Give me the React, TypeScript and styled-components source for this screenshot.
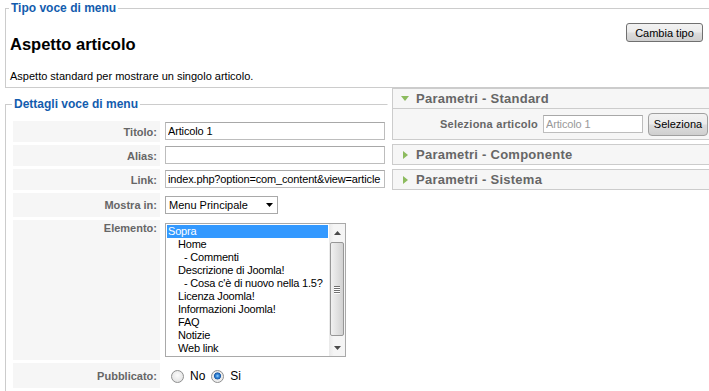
import React from 'react';
import styled, { createGlobalStyle } from 'styled-components';

const GlobalStyle = createGlobalStyle`
  html, body {
    margin: 0;
    padding: 0;
    background: #fff;
  }
  body {
    font-family: "Liberation Sans", Arial, sans-serif;
    font-size: 11px;
    color: #000;
    overflow: hidden;
  }
`;

const Page = styled.div`
  width: 712px;
`;

const Fieldset = styled.fieldset<{ $pad: string; $margin: string; $openRight?: boolean }>`
  margin: ${(p) => p.$margin};
  padding: ${(p) => p.$pad};
  border: 1px solid #ccc;
  border-right-color: ${(p) => (p.$openRight ? 'transparent' : '#ccc')};
  min-width: 0;
`;

const Legend = styled.legend`
  color: #135cae;
  font: bold 12px/17px "Liberation Sans", Arial, sans-serif;
  padding: 0 2px;
  margin-left: -1px;
`;

const TypeRow = styled.div`
  display: flex;
  justify-content: space-between;
  align-items: flex-start;
`;

const Heading = styled.h2`
  margin: 11px 0 0;
  font-size: 16.5px;
  line-height: 20px;
  font-weight: bold;
`;

const Description = styled.p`
  margin: 15px 0 0;
  line-height: 14px;
`;

const Button = styled.button<{ $w: number; $h: number }>`
  width: ${(p) => p.$w}px;
  height: ${(p) => p.$h}px;
  padding: 0;
  font: 11px "Liberation Sans", Arial, sans-serif;
  color: #000;
  border: 1px solid #707070;
  border-radius: 3px;
  background: linear-gradient(#f2f2f2, #ebebeb 48%, #dddddd 52%, #cfcfcf);
`;

const SelectButton = styled(Button)`
  margin-left: 5px;
  border-radius: 4px;
  border-color: #a0a0a0;
`;

const Main = styled.div`
  display: flex;
  align-items: flex-start;
`;

const LeftCol = styled.div`
  width: 388px;
  flex: none;
`;

const RightCol = styled.div`
  flex: 1;
  margin-left: 4px;
`;

const FormGrid = styled.div`
  display: grid;
  grid-template-columns: 147px 1fr;
  column-gap: 2px;
  row-gap: 3px;
`;

const LabelCell = styled.div<{ $top?: boolean }>`
  background: #f6f6f6;
  display: flex;
  justify-content: flex-end;
  align-items: ${(p) => (p.$top ? 'flex-start' : 'center')};
  padding: ${(p) => (p.$top ? '2px 3px 0 0' : '0 3px 0 0')};
  font-weight: bold;
  color: #666;
`;

const ValueCell = styled.div<{ $pad?: string }>`
  padding: ${(p) => p.$pad || '1px 3px 2px'};
  display: flex;
  align-items: center;
`;

const TextInput = styled.input<{ $w: number; $muted?: boolean }>`
  box-sizing: border-box;
  width: ${(p) => p.$w}px;
  height: 18px;
  margin: 0;
  padding: 0 1px 0 2px;
  border: 1px solid #bdbdbd;
  border-top-color: #a8a8a8;
  font: 11px "Liberation Sans", Arial, sans-serif;
  letter-spacing: -0.15px;
  color: ${(p) => (p.$muted ? '#999' : '#000')};
  background: #fff;
  outline: none;
`;

const Select = styled.div`
  box-sizing: border-box;
  width: 113px;
  height: 18px;
  border: 1px solid #a9a9a9;
  display: flex;
  align-items: center;
  justify-content: space-between;
  padding: 0 4px 0 3px;
  background: #fff;
`;

const ListBox = styled.div`
  box-sizing: border-box;
  width: 181px;
  height: 134px;
  border: 1px solid #a9a9a9;
  display: flex;
  background: #fff;
`;

const ListItems = styled.div`
  flex: 1;
  padding: 1px;
  overflow: hidden;
`;

const ListItem = styled.div<{ $level: number; $selected?: boolean }>`
  height: 13px;
  line-height: 13px;
  white-space: nowrap;
  letter-spacing: -0.2px;
  padding-left: ${(p) => [1, 11, 17][p.$level]}px;
  background: ${(p) => (p.$selected ? '#3399ff' : 'transparent')};
  color: ${(p) => (p.$selected ? '#fff' : '#000')};
`;

const Scrollbar = styled.div`
  width: 16px;
  display: flex;
  flex-direction: column;
  background: linear-gradient(90deg, #e9e9e9, #f5f5f5 30%, #f5f5f5);
`;

const ScrollButton = styled.div`
  height: 17px;
  display: flex;
  align-items: center;
  justify-content: center;
`;

const Track = styled.div`
  flex: 1;
  padding: 1px 1px 3px;
  display: flex;
  flex-direction: column;
`;

const Thumb = styled.div`
  height: 92px;
  border: 1px solid #979797;
  border-radius: 2px;
  background: linear-gradient(90deg, #f1f1f1, #e3e3e3 45%, #d2d2d2);
  display: flex;
  flex-direction: column;
  align-items: center;
  justify-content: center;
  gap: 1px;
`;

const Grip = styled.span`
  width: 6px;
  height: 1px;
  background: #707070;
  box-shadow: 0 1px 0 #fff;
`;

const RadioGroup = styled.div`
  display: flex;
  align-items: center;
  padding-left: 6px;
`;

const Radio = styled.span<{ $checked?: boolean }>`
  box-sizing: border-box;
  width: 13px;
  height: 13px;
  border-radius: 50%;
  border: 1px solid #8e8f8f;
  background: ${(p) =>
    p.$checked
      ? 'radial-gradient(circle at 50% 45%, #9fd6ff 0, #3c8fe0 1.5px, #1b5aa6 3.2px, #e9e9e9 3.8px, #f6f6f6)'
      : 'radial-gradient(circle at 50% 40%, #fbfbfb, #dcdcdc)'};
`;

const RadioText = styled.span`
  margin: 0 6px 0 6px;
  font-size: 12px;
`;

const Panel = styled.div`
  border: 1px solid #ccc;
  margin-bottom: 4px;
  background: #f6f6f6;
`;

const PanelHeader = styled.h3`
  margin: 0;
  height: 19px;
  display: flex;
  align-items: center;
  padding-left: 8px;
  font: bold 13px "Liberation Sans", Arial, sans-serif;
  letter-spacing: 0.25px;
  color: #666;
`;

const ArrowSlot = styled.span`
  width: 8px;
  margin-right: 7px;
  display: flex;
  justify-content: center;
`;

const PanelBody = styled.div`
  border-top: 1px solid #ccc;
  height: 30px;
  display: flex;
  align-items: center;
`;

const ParamLabel = styled.span`
  width: 145px;
  text-align: right;
  font-weight: bold;
  color: #666;
  letter-spacing: 0.25px;
  margin-right: 5px;
`;

const menuItems: { text: string; level: number }[] = [
  { text: 'Sopra', level: 0 },
  { text: 'Home', level: 1 },
  { text: '- Commenti', level: 2 },
  { text: 'Descrizione di Joomla!', level: 1 },
  { text: "- Cosa c'è di nuovo nella 1.5?", level: 2 },
  { text: 'Licenza Joomla!', level: 1 },
  { text: 'Informazioni Joomla!', level: 1 },
  { text: 'FAQ', level: 1 },
  { text: 'Notizie', level: 1 },
  { text: 'Web link', level: 1 },
];

const Tri: React.FC<{ dir: 'down' | 'right' | 'up'; color: string }> = ({ dir, color }) => {
  if (dir === 'right') {
    return (
      <svg width="5" height="8" viewBox="0 0 5 8">
        <polygon points="0,0 5,4 0,8" fill={color} />
      </svg>
    );
  }
  if (dir === 'up') {
    return (
      <svg width="7" height="4" viewBox="0 0 7 4">
        <polygon points="0,4 3.5,0 7,4" fill={color} />
      </svg>
    );
  }
  return (
    <svg width="8" height="5" viewBox="0 0 8 5">
      <polygon points="0,0 8,0 4,5" fill={color} />
    </svg>
  );
};

const SmallDown: React.FC<{ color: string }> = ({ color }) => (
  <svg width="7" height="4" viewBox="0 0 7 4">
    <polygon points="0,0 7,0 3.5,4" fill={color} />
  </svg>
);

const PaneToggler: React.FC<{ title: string; open?: boolean }> = ({ title, open }) => (
  <PanelHeader>
    <ArrowSlot>
      <Tri dir={open ? 'down' : 'right'} color="#8cbb5e" />
    </ArrowSlot>
    {title}
  </PanelHeader>
);

const App: React.FC = () => {
  return (
    <Page>
      <GlobalStyle />
      <Fieldset $margin="0 0 0 5px" $pad="6px 8px 4px 4px">
        <Legend>Tipo voce di menu</Legend>
        <TypeRow>
          <div>
            <Heading>Aspetto articolo</Heading>
            <Description>Aspetto standard per mostrare un singolo articolo.</Description>
          </div>
          <Button $w={77} $h={19}>Cambia tipo</Button>
        </TypeRow>
      </Fieldset>

      <Main>
        <LeftCol>
          <Fieldset $margin="8px 0 0 5px" $pad="8px 0 0 7px" $openRight>
            <Legend>Dettagli voce di menu</Legend>
            <FormGrid>
              <LabelCell>Titolo:</LabelCell>
              <ValueCell>
                <TextInput $w={220} defaultValue="Articolo 1" readOnly />
              </ValueCell>

              <LabelCell>Alias:</LabelCell>
              <ValueCell>
                <TextInput $w={220} defaultValue="" readOnly />
              </ValueCell>

              <LabelCell>Link:</LabelCell>
              <ValueCell>
                <TextInput $w={220} defaultValue="index.php?option=com_content&view=article" readOnly />
              </ValueCell>

              <LabelCell>Mostra in:</LabelCell>
              <ValueCell $pad="3px 3px">
                <Select>
                  <span>Menu Principale</span>
                  <SmallDown color="#000" />
                </Select>
              </ValueCell>

              <LabelCell $top>Elemento:</LabelCell>
              <ValueCell $pad="3px 3px 3px">
                <ListBox>
                  <ListItems>
                    {menuItems.map((item, i) => (
                      <ListItem key={item.text} $level={item.level} $selected={i === 0}>
                        {item.text}
                      </ListItem>
                    ))}
                  </ListItems>
                  <Scrollbar>
                    <ScrollButton>
                      <Tri dir="up" color="#4a4a4a" />
                    </ScrollButton>
                    <Track>
                      <Thumb>
                        <Grip />
                        <Grip />
                        <Grip />
                        <Grip />
                      </Thumb>
                    </Track>
                    <ScrollButton>
                      <SmallDown color="#4a4a4a" />
                    </ScrollButton>
                  </Scrollbar>
                </ListBox>
              </ValueCell>

              <LabelCell>Pubblicato:</LabelCell>
              <ValueCell $pad="6px 3px 5px">
                <RadioGroup>
                  <Radio />
                  <RadioText>No</RadioText>
                  <Radio $checked />
                  <RadioText>Si</RadioText>
                </RadioGroup>
              </ValueCell>

              <LabelCell />
              <ValueCell $pad="12px 3px" />
            </FormGrid>
          </Fieldset>
        </LeftCol>

        <RightCol>
          <Panel>
            <PaneToggler title="Parametri - Standard" open />
            <PanelBody>
              <ParamLabel>Seleziona articolo</ParamLabel>
              <TextInput $w={100} $muted defaultValue="Articolo 1" readOnly />
              <SelectButton $w={60} $h={23}>
                Seleziona
              </SelectButton>
            </PanelBody>
          </Panel>
          <Panel>
            <PaneToggler title="Parametri - Componente" />
          </Panel>
          <Panel>
            <PaneToggler title="Parametri - Sistema" />
          </Panel>
        </RightCol>
      </Main>
    </Page>
  );
};

export default App;
